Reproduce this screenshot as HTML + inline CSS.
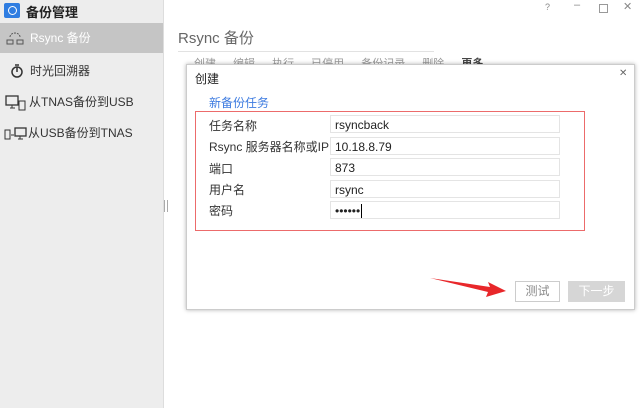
<!DOCTYPE html>
<html><head><meta charset="utf-8"><style>
body{margin:0;width:640px;height:408px;overflow:hidden;background:#fff;font-family:"Liberation Sans","Noto Sans CJK SC",sans-serif;position:relative}
.a{position:absolute}
.side{left:0;top:0;width:163px;height:408px;background:#ededed;border-right:1px solid #ddd}
.it{position:absolute;left:0;width:163px;height:30px;line-height:30px;font-size:12px;color:#333}
.inp{position:absolute;left:330px;width:230px;height:18px;border:1px solid #e4e4e4;background:#fff;font-size:12px;line-height:18px;padding-left:4px;color:#222;box-sizing:border-box}
.lb{position:absolute;left:209px;font-size:12px;color:#333}
</style></head><body>
<div class="a side"></div>
<div class="a" style="left:4px;top:3px;width:16px;height:15px;background:#2f7de1;border-radius:2px"></div>
<div class="a" style="left:8px;top:6px;width:7px;height:7px;border:1px solid #fff;border-radius:50%"></div>
<div class="a" style="left:26px;top:2px;font-size:13px;font-weight:bold;color:#222">备份管理</div>
<div class="it" style="top:23px;background:#c5c5c5;color:#fff"><span style="margin-left:30px">Rsync 备份</span></div>
<svg class="a" style="left:6px;top:30px" width="18" height="16"><path d="M4 7a5 4 0 0 1 10 0" fill="none" stroke="#555" stroke-dasharray="2 1"/><rect x="1" y="10" width="6" height="4" fill="none" stroke="#555"/><rect x="11" y="10" width="6" height="4" fill="none" stroke="#555"/></svg>
<div class="it" style="top:56px"><span style="margin-left:30px">时光回溯器</span></div>
<svg class="a" style="left:10px;top:64px" width="14" height="14"><circle cx="7" cy="8" r="5" fill="none" stroke="#333" stroke-width="1.5"/><path d="M7 8V3M5 1h4" stroke="#333" stroke-width="1.5"/></svg>
<div class="it" style="top:87px"><span style="margin-left:29px">从TNAS备份到USB</span></div>
<svg class="a" style="left:5px;top:95px" width="22" height="16"><rect x="1" y="1" width="12" height="9" fill="none" stroke="#333" stroke-width="1.3"/><path d="M5 13h5M7 10v3" stroke="#333"/><rect x="14" y="6" width="6" height="9" fill="none" stroke="#333"/></svg>
<div class="it" style="top:118px"><span style="margin-left:28px">从USB备份到TNAS</span></div>
<svg class="a" style="left:3px;top:126px" width="26" height="16"><rect x="2" y="4" width="5" height="9" fill="none" stroke="#333"/><path d="M8 9h3" stroke="#333"/><rect x="12" y="2" width="11" height="8" fill="none" stroke="#333" stroke-width="1.3"/><path d="M15 13h5M17 10v3" stroke="#333"/></svg>
<div class="a" style="left:164px;top:200px;width:2px;height:12px;border-left:1px solid #aaa;border-right:1px solid #aaa"></div>
<div class="a" style="left:545px;top:2px;font-size:9px;color:#888">?</div>
<div class="a" style="left:574px;top:-1px;font-size:11px;color:#888">–</div>
<div class="a" style="left:599px;top:4px;width:7px;height:7px;border:1px solid #999"></div>
<div class="a" style="left:623px;top:0px;font-size:11px;color:#888">✕</div>
<div class="a" style="left:178px;top:27px;font-size:15px;color:#666">Rsync 备份</div>
<div class="a" style="left:178px;top:51px;width:256px;border-top:1px solid #e2e2e2"></div>
<div class="a" style="left:194px;top:55px;font-size:11px;color:#999;word-spacing:14px">创建 编辑 执行 已停用 备份记录 删除 <b style="color:#444">更多</b></div>
<div class="a" style="left:186px;top:64px;width:447px;height:244px;background:#fff;border:1px solid #ccc;box-shadow:0 0 4px rgba(0,0,0,.3)"></div>
<div class="a" style="left:195px;top:70px;font-size:12px;color:#222">创建</div>
<div class="a" style="left:619px;top:68px;font-size:10px;color:#666">✕</div>
<div class="a" style="left:209px;top:94px;font-size:12px;color:#3d7be0">新备份任务</div>
<div class="a" style="left:195px;top:111px;width:390px;height:120px;border:1px solid #ec6b6b;box-sizing:border-box"></div>
<div class="lb" style="top:117px">任务名称</div><div class="inp" style="top:115px">rsyncback</div>
<div class="lb" style="top:138px">Rsync 服务器名称或IP</div><div class="inp" style="top:137px">10.18.8.79</div>
<div class="lb" style="top:160px">端口</div><div class="inp" style="top:158px">873</div>
<div class="lb" style="top:181px">用户名</div><div class="inp" style="top:180px">rsync</div>
<div class="lb" style="top:202px">密码</div><div class="inp" style="top:201px">••••••<span style="border-left:1px solid #000;margin-left:1px"></span></div>
<svg class="a" style="left:430px;top:275px" width="80" height="25"><polygon points="0,3 60,12 58,7 76,16 56,22 58,17" fill="#e8272a"/></svg>
<div class="a" style="left:515px;top:281px;width:45px;height:21px;border:1px solid #ccc;box-sizing:border-box;font-size:12px;color:#888;text-align:center;line-height:19px">测试</div>
<div class="a" style="left:568px;top:281px;width:57px;height:21px;background:#d6d6d6;font-size:12px;color:#fff;text-align:center;line-height:21px">下一步</div>
</body></html>
